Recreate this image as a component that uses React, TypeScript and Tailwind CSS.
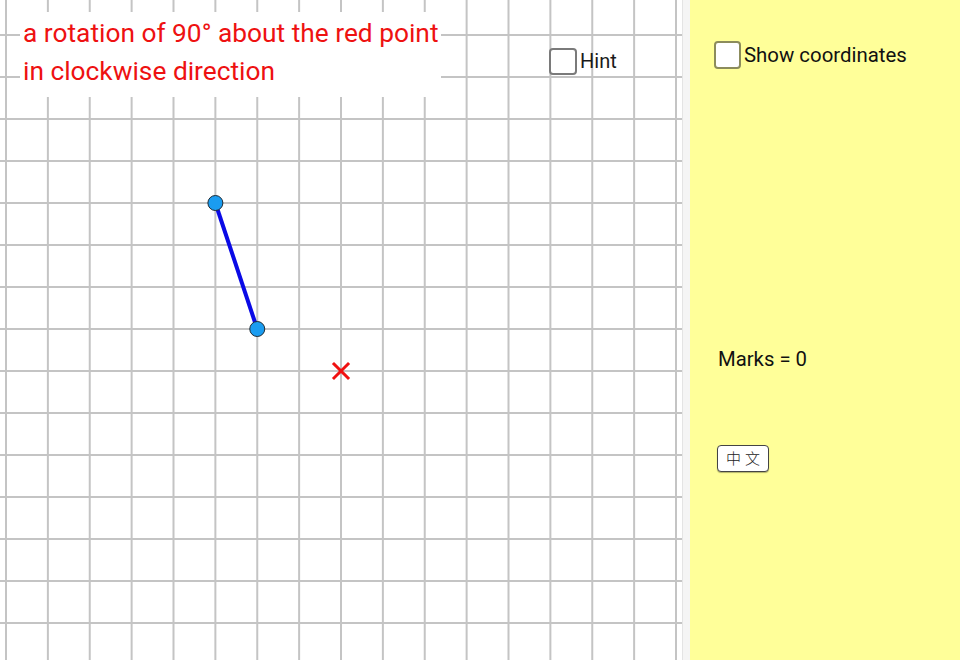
import React from 'react';

const STEP_X = 41.875;
const STEP_Y = 42;

function GridCanvas() {
  const xs = Array.from({ length: 17 }, (_, i) => 6 + STEP_X * i);
  const ys = Array.from({ length: 15 }, (_, j) => 35 + STEP_Y * j);
  const ax = 6 + STEP_X * 5;
  const bx = 6 + STEP_X * 6;
  const cx = 6 + STEP_X * 8;

  return (
    <svg width="682" height="660" className="block">
      <rect width="682" height="660" fill="#ffffff" />
      {xs.map((x, i) => (
        <line key={'v' + i} x1={x} y1={0} x2={x} y2={660} stroke="#c4c4c4" strokeWidth="2" />
      ))}
      {ys.map((y, j) => (
        <line key={'h' + j} x1={0} y1={y} x2={682} y2={y} stroke="#c4c4c4" strokeWidth="2" />
      ))}
      <line x1={ax} y1={203} x2={bx} y2={329} stroke="#0a0ae6" strokeWidth="4" />
      <circle cx={ax} cy={203} r="7.5" fill="#1a9cf0" stroke="#1f2a33" strokeWidth="1" />
      <circle cx={bx} cy={329} r="7.5" fill="#1a9cf0" stroke="#1f2a33" strokeWidth="1" />
      <g stroke="#f01010" strokeWidth="3" strokeLinecap="square">
        <line x1={cx - 7} y1={364} x2={cx + 7} y2={378} />
        <line x1={cx - 7} y1={378} x2={cx + 7} y2={364} />
      </g>
    </svg>
  );
}

export default function App() {
  return (
    <div
      className="flex w-[960px] h-[660px] overflow-hidden bg-white"
      style={{ fontFamily: 'Roboto, "Noto Sans", sans-serif' }}
    >
      {/* graphics view */}
      <div className="relative w-[682px] h-[660px] shrink-0">
        <GridCanvas />

        <div className="absolute left-[20px] top-[12px] w-[421px] h-[85px] bg-white pl-[3px] pt-[2px] text-[26.3px] leading-[38px] text-[#ee1111]">
          <div>a rotation of 90° about the red point</div>
          <div>in clockwise direction</div>
        </div>

        <label className="absolute left-[549px] top-[46px] flex items-center gap-[3px] text-[20px] text-[#1a1a1a]">
          <span className="w-[28px] h-[27px] rounded-[4px] border-2 border-[#7a7a7a] bg-white" />
          <span>Hint</span>
        </label>
      </div>

      {/* splitter */}
      <div className="w-[8px] h-full shrink-0 bg-[#f5f5f5] border-l border-[#e4e4e4]" />

      {/* side panel */}
      <div className="flex-1 h-full bg-[#ffff99] pt-[40px] pl-[24px] flex flex-col items-start">
        <label className="flex items-center gap-[3px] text-[20.4px] text-[#111]">
          <span className="w-[27px] h-[28px] rounded-[4px] border-2 border-[#8c8c5c] bg-white" />
          <span>Show coordinates</span>
        </label>

        <div className="mt-[274px] ml-[4px] text-[20.3px] leading-[28px] text-[#111]">Marks = 0</div>

        <button
          className="mt-[72px] ml-[3px] w-[52px] h-[27px] rounded-[4px] border border-[#444] bg-white text-[15px] tracking-[4px] pl-[4px] text-[#222] shadow-[0_1px_1px_rgba(0,0,0,0.3)]"
          style={{ fontFamily: '"Noto Sans CJK TC", "Noto Sans CJK SC", sans-serif', fontWeight: 300 }}
        >
          中文
        </button>
      </div>
    </div>
  );
}
